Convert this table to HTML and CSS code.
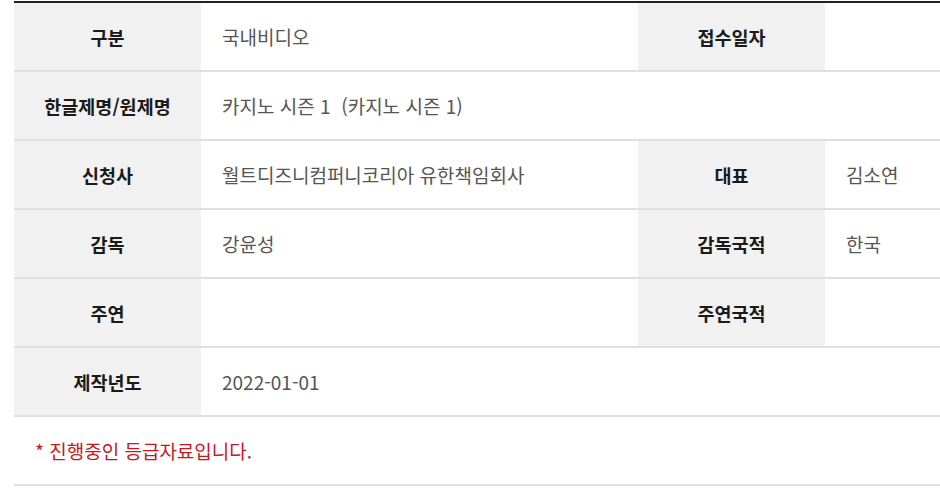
FILE: index.html
```html
<!DOCTYPE html>
<html lang="ko">
<head>
<meta charset="utf-8">
<title>등급자료</title>
<link rel="stylesheet" href="styles.css">
</head>
<body>
<div class="wrap">
  <table class="info">
    <colgroup>
      <col class="c-th"><col class="c-td"><col class="c-th"><col class="c-th">
    </colgroup>
    <tr>
      <th>구분</th><td>국내비디오</td><th>접수일자</th><td></td>
    </tr>
    <tr>
      <th>한글제명/원제명</th><td colspan="3">카지노 시즌 1 &nbsp;(카지노 시즌 1)</td>
    </tr>
    <tr>
      <th>신청사</th><td>월트디즈니컴퍼니코리아 유한책임회사</td><th>대표</th><td>김소연</td>
    </tr>
    <tr>
      <th>감독</th><td>강윤성</td><th>감독국적</th><td>한국</td>
    </tr>
    <tr>
      <th>주연</th><td></td><th>주연국적</th><td></td>
    </tr>
    <tr>
      <th>제작년도</th><td colspan="3">2022-01-01</td>
    </tr>
  </table>
  <div class="note">* 진행중인 등급자료입니다.</div>
</div>
</body>
</html>
```

FILE: styles.css
```css
html, body {
  margin: 0;
  padding: 0;
  background: #fff;
  overflow: hidden;
}
body {
  font-family: "Noto Sans CJK KR", "Noto Sans", sans-serif;
  font-size: 19px;
}
.wrap {
  padding: 1px 0 0 14px;
  width: 1012px;
}
.info {
  width: 998px;
  border-collapse: collapse;
  table-layout: fixed;
  border-top: 2px solid #222;
}
.c-th { width: 187px; }
.c-td { width: 437px; }
.info th,
.info td {
  height: 67px;
  padding: 0;
  border-bottom: 2px solid #e0e0e0;
  vertical-align: middle;
  line-height: 26px;
}
.info th {
  background: #f1f1f1;
  color: #1a1a1a;
  font-weight: 700;
  font-size: 18.5px;
  text-align: center;
}
.info td {
  color: #555;
  font-weight: 400;
  text-align: left;
  padding-left: 21px;
}
.note {
  height: 67px;
  border-bottom: 2px solid #e0e0e0;
  display: flex;
  align-items: center;
  padding-left: 21px;
  color: #c8171e;
  font-size: 19px;
}
```
